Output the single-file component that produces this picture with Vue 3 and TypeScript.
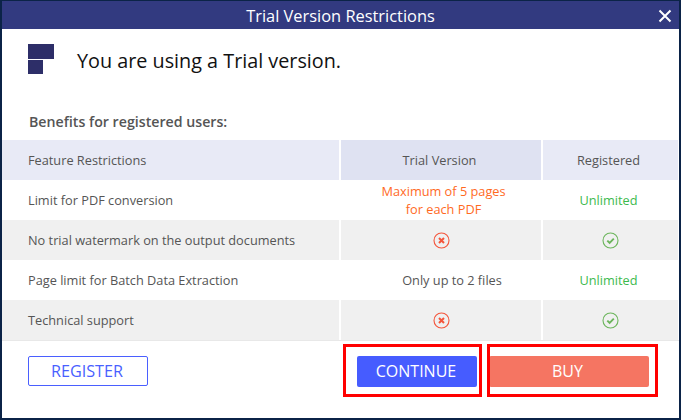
<template>
  <div class="screen">
    <div class="dialog">
      <header class="titlebar">
        <span class="title">Trial Version Restrictions</span>
        <svg class="close" width="14" height="14" viewBox="0 0 14 14">
          <path d="M1.5 1.5 L12.5 12.5 M12.5 1.5 L1.5 12.5" stroke="#fff" stroke-width="2" fill="none" />
        </svg>
      </header>

      <div class="intro">
        <svg class="logo" width="26" height="30" viewBox="0 0 26 30">
          <rect x="0" y="0" width="26" height="15" fill="#2d2e68" />
          <rect x="0" y="16" width="15" height="14" fill="#2d2e68" />
        </svg>
        <span class="headline">You are using a Trial version.</span>
      </div>

      <div class="benefits">Benefits for registered users:</div>

      <div class="table">
        <div class="row head">
          <div class="cell feature"><span class="txt">Feature Restrictions</span></div>
          <div class="cell trial"><span class="txt head-trial">Trial Version</span></div>
          <div class="cell reg"><span class="txt reg-txt">Registered</span></div>
        </div>
        <div v-for="(row, i) in rows" :key="i" class="row" :class="{ alt: i % 2 === 1 }">
          <div class="cell feature"><span class="txt">{{ row.name }}</span></div>
          <div class="cell trial">
            <svg v-if="row.trial === null" width="17" height="17" viewBox="0 0 17 17">
              <circle cx="8.5" cy="8.5" r="7.5" fill="none" stroke="#f4553b" stroke-width="1.1" />
              <path d="M6 6 L11 11 M11 6 L6 11" stroke="#f4553b" stroke-width="2" fill="none" />
            </svg>
            <span v-else class="txt" :class="row.limited ? 'orange' : 'files'" v-html="row.trial"></span>
          </div>
          <div class="cell reg">
            <svg v-if="row.registered === null" width="17" height="17" viewBox="0 0 17 17">
              <circle cx="8.5" cy="8.5" r="7.5" fill="none" stroke="#6cb55c" stroke-width="1.1" />
              <path d="M5.3 8.6 L7.6 10.8 L11.8 6.6" stroke="#6cb55c" stroke-width="1.9" fill="none" />
            </svg>
            <span v-else class="txt reg-txt green">{{ row.registered }}</span>
          </div>
        </div>
      </div>

      <footer class="footer">
        <button class="btn register">REGISTER</button>
        <div class="actions">
          <button class="btn continue">CONTINUE<i class="mark mark-continue"></i></button>
          <button class="btn buy">BUY<i class="mark mark-buy"></i></button>
        </div>
      </footer>
    </div>
  </div>
</template>

<script setup lang="ts">
interface Row {
  name: string
  trial: string | null
  registered: string | null
  limited?: boolean
}

const rows: Row[] = [
  { name: 'Limit for PDF conversion', trial: 'Maximum of 5 pages<br>for each PDF', registered: 'Unlimited', limited: true },
  { name: 'No trial watermark on the output documents', trial: null, registered: null },
  { name: 'Page limit for Batch Data Extraction', trial: 'Only up to 2 files', registered: 'Unlimited' },
  { name: 'Technical support', trial: null, registered: null }
]
</script>

<style scoped>
.screen {
  width: 681px;
  height: 420px;
  box-sizing: border-box;
  padding: 1px 2px 2px 2px;
  background: #0b2347;
  font-family: "Open Sans", "Liberation Sans", sans-serif;
  overflow: hidden;
}

.dialog {
  width: 677px;
  height: 417px;
  background: #fff;
  display: flex;
  flex-direction: column;
}

.titlebar {
  height: 28px;
  flex: none;
  background: #323a80;
  color: #fff;
  display: flex;
  align-items: center;
  justify-content: center;
  position: relative;
  font-size: 16.4px;
}

.close {
  position: absolute;
  right: 7px;
  top: 8px;
}

.intro {
  height: 62px;
  flex: none;
  display: flex;
  align-items: center;
  padding-left: 26px;
  padding-bottom: 2px;
  box-sizing: border-box;
}

.headline {
  margin-left: 23px;
  margin-top: 2px;
  font-size: 19.8px;
  color: #111;
}

.benefits {
  height: 49px;
  flex: none;
  box-sizing: border-box;
  padding: 21px 0 0 27px;
  font-size: 14.2px;
  font-weight: 600;
  color: #555;
}

.table {
  flex: none;
  border-bottom: 1px solid #e8e8e8;
}

.row {
  display: grid;
  grid-template-columns: 337px 200px 135px;
  column-gap: 2px;
  height: 40px;
  font-size: 12.75px;
  color: #555;
}

.cell {
  display: flex;
  align-items: center;
  justify-content: center;
  text-align: center;
  line-height: 18px;
}

.cell.feature {
  justify-content: flex-start;
  padding-left: 26px;
}

.head .cell {
  background: #e8eaf6;
}

.head .cell.trial {
  background: #dfe2f2;
}

.alt .cell {
  background: #f0f0f0;
}

.head-trial {
  margin-right: 3px;
}

.reg-txt {
  margin-right: 4px;
}

.files {
  margin-left: 22px;
}

.orange {
  margin-left: 5px;
  color: #ff6a1f;
}

.green {
  color: #3dba4e;
}

.footer {
  flex: 1;
  display: flex;
  justify-content: space-between;
  padding: 15px 30px 0 26px;
}

.actions {
  display: flex;
  gap: 12px;
}

.btn {
  height: 31px;
  border: none;
  border-radius: 2px;
  font-family: inherit;
  font-size: 16px;
  color: #fff;
  padding: 0 0 2px;
  position: relative;
}

.register {
  width: 120px;
  height: 30px;
  background: #fff;
  border: 1px solid #4a5fff;
  color: #4a5fff;
  font-size: 16.2px;
  padding: 0 2px 0 0;
}

.continue {
  width: 120px;
  background: #465cff;
  padding-right: 2px;
}

.buy {
  width: 160px;
  background: #f57562;
  padding-right: 3px;
}

.mark {
  position: absolute;
  border: 3px solid #f00;
  pointer-events: none;
}

.mark-continue {
  left: -14px;
  right: -5px;
  top: -12px;
  bottom: -10px;
}

.mark-buy {
  left: -2px;
  right: -9px;
  top: -12px;
  bottom: -10px;
}
</style>

<style>
body {
  margin: 0;
}
</style>
